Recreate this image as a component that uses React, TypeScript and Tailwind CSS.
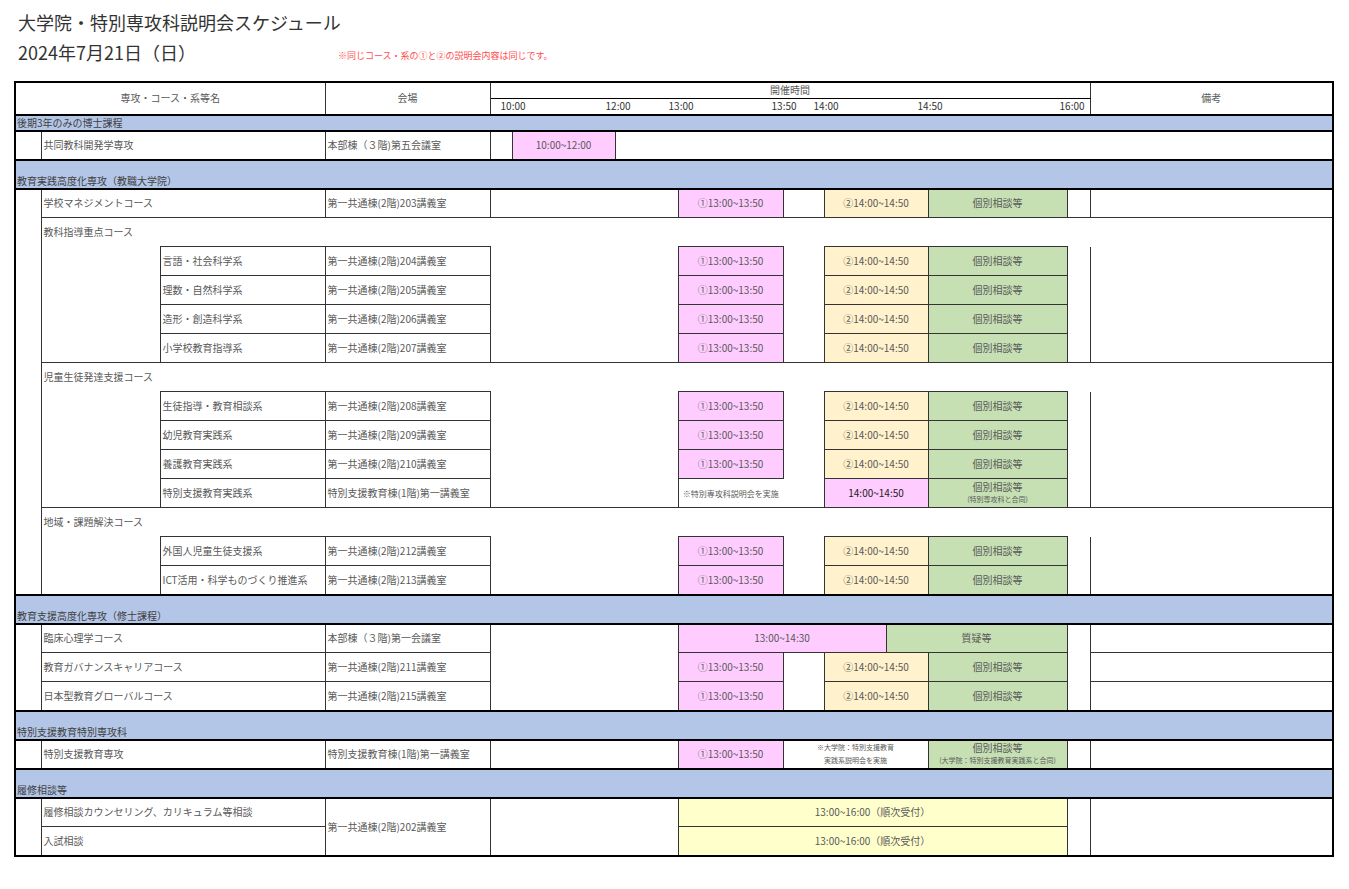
import React from "react";

type Cell = {
  s?: number;
  t?: React.ReactNode;
  bg?: string;
  blank?: boolean;
  c?: boolean;
  cls?: string;
  rs?: number;
};

const WIDTHS = [26, 119, 165, 165, 22, 103, 63, 105, 41, 62, 42, 139, 23, 243];

const P = "bg-[#ffccff]";
const O = "bg-[#fff2cc]";
const G = "bg-[#c6e0b4]";
const Y = "bg-[#ffffcc]";

const blank = (s = 1): Cell => ({ s, blank: true });

function course(name: string, venue: string, sub: boolean): Cell[] {
  const lead: Cell[] = sub ? [blank(), blank(), { t: name }] : [blank(), { s: 2, t: name }];
  return [
    ...lead,
    { t: venue },
    blank(3),
    { t: "①13:00~13:50", bg: P, c: true },
    blank(),
    { s: 2, t: "②14:00~14:50", bg: O, c: true },
    { t: "個別相談等", bg: G, c: true },
    blank(),
    sub ? blank() : {},
  ];
}

const group = (name: string): Cell[] => [blank(), { s: 13, t: name, cls: "border-b-0" }];

type Row = { band?: string; h?: number; cells?: Cell[] };

const ROWS: Row[] = [
  { band: "後期3年のみの博士課程", h: 16 },
  {
    cells: [
      blank(),
      { s: 2, t: "共同教科開発学専攻" },
      { t: "本部棟（３階)第五会議室" },
      {},
      { t: "10:00~12:00", bg: P, c: true },
      { s: 8 },
    ],
  },
  { band: "教育実践高度化専攻（教職大学院）" },
  { cells: course("学校マネジメントコース", "第一共通棟(2階)203講義室", false) },
  { cells: group("教科指導重点コース") },
  { cells: course("言語・社会科学系", "第一共通棟(2階)204講義室", true) },
  { cells: course("理数・自然科学系", "第一共通棟(2階)205講義室", true) },
  { cells: course("造形・創造科学系", "第一共通棟(2階)206講義室", true) },
  { cells: course("小学校教育指導系", "第一共通棟(2階)207講義室", true) },
  { cells: group("児童生徒発達支援コース") },
  { cells: course("生徒指導・教育相談系", "第一共通棟(2階)208講義室", true) },
  { cells: course("幼児教育実践系", "第一共通棟(2階)209講義室", true) },
  { cells: course("養護教育実践系", "第一共通棟(2階)210講義室", true) },
  {
    cells: [
      blank(),
      blank(),
      { t: "特別支援教育実践系" },
      { t: "特別支援教育棟(1階)第一講義室" },
      blank(3),
      { t: <span className="text-[8px]">※特別専攻科説明会を実施</span>, c: true, cls: "border-y-0 border-r-0" },
      { blank: true, cls: "border-l-0" },
      { s: 2, t: <span className="text-[#222]">14:00~14:50</span>, bg: P, c: true },
      {
        t: (
          <div className="leading-[13px]">
            <div>個別相談等</div>
            <div className="text-[7px]">(特別専攻科と合同)</div>
          </div>
        ),
        bg: G,
        c: true,
      },
      blank(),
      blank(),
    ],
  },
  { cells: group("地域・課題解決コース") },
  { cells: course("外国人児童生徒支援系", "第一共通棟(2階)212講義室", true) },
  { cells: course("ICT活用・科学ものづくり推進系", "第一共通棟(2階)213講義室", true) },
  { band: "教育支援高度化専攻（修士課程）" },
  {
    cells: [
      blank(),
      { s: 2, t: "臨床心理学コース" },
      { t: "本部棟（３階)第一会議室" },
      blank(3),
      { s: 3, t: "13:00~14:30", bg: P, c: true },
      { s: 2, t: "質疑等", bg: G, c: true },
      blank(),
      blank(),
    ],
  },
  { cells: course("教育ガバナンスキャリアコース", "第一共通棟(2階)211講義室", false).map((c, i) => (i === 10 ? blank() : c)) },
  { cells: course("日本型教育グローバルコース", "第一共通棟(2階)215講義室", false).map((c, i) => (i === 10 ? blank() : c)) },
  { band: "特別支援教育特別専攻科" },
  {
    cells: [
      blank(),
      { s: 2, t: "特別支援教育専攻" },
      { t: "特別支援教育棟(1階)第一講義室" },
      blank(3),
      { t: "①13:00~13:50", bg: P, c: true },
      {
        s: 3,
        c: true,
        t: (
          <div className="text-[7px] leading-[13px]">
            <div>※大学院：特別支援教育</div>
            <div>実践系説明会を実施</div>
          </div>
        ),
      },
      {
        t: (
          <div className="leading-[13px]">
            <div>個別相談等</div>
            <div className="text-[7px]">(大学院：特別支援教育実践系と合同)</div>
          </div>
        ),
        bg: G,
        c: true,
      },
      blank(),
      blank(),
    ],
  },
  { band: "履修相談等" },
  {
    cells: [
      blank(),
      { s: 2, t: "履修相談カウンセリング、カリキュラム等相談" },
      { t: "第一共通棟(2階)202講義室", rs: 2 },
      blank(3),
      { s: 5, t: "13:00~16:00（順次受付）", bg: Y, c: true },
      blank(),
      blank(),
    ],
  },
  {
    cells: [
      blank(),
      { s: 2, t: "入試相談" },
      blank(3),
      { s: 5, t: "13:00~16:00（順次受付）", bg: Y, c: true },
      blank(),
      blank(),
    ],
  },
];

const TIMES: [string, number][] = [
  ["10:00", 10],
  ["12:00", 115],
  ["13:00", 178],
  ["13:50", 281],
  ["14:00", 323],
  ["14:50", 427],
  ["16:00", 569],
];

export default function App() {
  return (
    <div
      className="w-[1349px] h-[889px] bg-white text-[#595959] overflow-hidden"
      style={{ fontFamily: '"Noto Sans CJK JP", "Noto Sans", sans-serif' }}
    >
      <div className="pl-[18px] pt-[10px] text-[#333]">
        <h1 className="text-[18px] leading-[24px] font-normal">大学院・特別専攻科説明会スケジュール</h1>
        <div className="flex items-end mt-[6px] h-[24px]">
          <span className="text-[18px] leading-[24px]">2024年7月21日（日）</span>
          <span className="ml-[142px] text-[9px] text-[#ff4d4d] leading-[16px]">
            ※同じコース・系の①と②の説明会内容は同じです。
          </span>
        </div>
      </div>

      <table className="ml-[14px] mt-[17px] border-collapse table-fixed text-[10px] leading-[12px] border-2 border-black w-[1318px]">
        <colgroup>
          {WIDTHS.map((w, i) => (
            <col key={i} style={{ width: w }} />
          ))}
        </colgroup>
        <tbody>
          <tr className="h-[16px]">
            <td colSpan={3} rowSpan={2} className="border border-[#333] text-center">専攻・コース・系等名</td>
            <td rowSpan={2} className="border border-[#333] text-center">会場</td>
            <td colSpan={9} className="border border-[#333] border-b-black text-center">開催時間</td>
            <td rowSpan={2} className="border border-[#333] text-center">備考</td>
          </tr>
          <tr className="h-[16px]">
            <td colSpan={9} className="border border-[#333] p-0">
              <div className="relative h-[15px]">
                {TIMES.map(([t, x]) => (
                  <span key={t} className="absolute top-[1px] text-[#333]" style={{ left: x }}>
                    {t}
                  </span>
                ))}
              </div>
            </td>
          </tr>
          {ROWS.map((r, i) =>
            r.band ? (
              <tr key={i} style={{ height: r.h ?? 29 }}>
                <td colSpan={14} className="bg-[#b4c6e7] border-y-2 border-black align-bottom px-[1px] pb-[1px] text-[#404040]">
                  {r.band}
                </td>
              </tr>
            ) : (
              <tr key={i} className="h-[29px]">
                {r.cells!.map((c, j) => (
                  <td
                    key={j}
                    colSpan={c.s ?? 1}
                    rowSpan={c.rs ?? 1}
                    className={`border border-[#333] px-[2px] py-0 whitespace-nowrap overflow-hidden ${
                      c.blank ? "border-y-0" : ""
                    } ${c.c ? "text-center" : ""} ${c.bg ?? ""} ${c.cls ?? ""}`}
                  >
                    {c.t}
                  </td>
                ))}
              </tr>
            )
          )}
        </tbody>
      </table>
    </div>
  );
}
